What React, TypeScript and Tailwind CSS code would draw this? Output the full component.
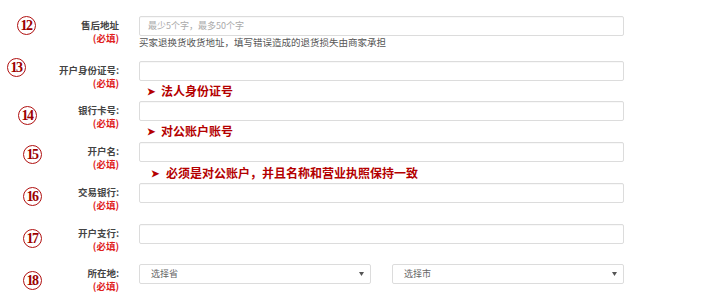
import type { ReactNode } from 'react';

const cjk = { fontFamily: '"Noto Sans CJK SC", "Noto Sans", sans-serif' };

function Circle({ n, className }: { n: string; className: string }) {
  return (
    <div
      className={`w-[19px] h-[19px] shrink-0 rounded-full border border-[#b01010] flex items-center justify-center text-[14px] font-bold leading-none text-[#9c0000] tracking-[-1.5px] ${className}`}
      style={{ fontFamily: '"Liberation Serif", serif' }}
    >
      <span className="-ml-[1px]">{n}</span>
    </div>
  );
}

function Note({ children, className }: { children: ReactNode; className: string }) {
  return (
    <div className={`flex items-center text-[12px] leading-[12px] font-bold text-[#b40000] ${className}`}>
      <span className="text-[10px] w-[14px]">➤</span>
      <span>{children}</span>
    </div>
  );
}

function Row({
  n,
  circle,
  label,
  height,
  children,
}: {
  n: string;
  circle: string;
  label: string;
  height: string;
  children: ReactNode;
}) {
  return (
    <div className={`flex items-start ${height}`}>
      <div className="w-[139px] shrink-0 flex items-start">
        <Circle n={n} className={circle} />
        <div className="ml-auto mr-[20px] mt-[3px] text-right text-[9.5px] leading-[13px]">
          <div className="text-[#444] font-semibold">{label}</div>
          <div className="text-[#e0201c] font-semibold">(必填)</div>
        </div>
      </div>
      <div className="w-[485px]">{children}</div>
    </div>
  );
}

function Input({ placeholder }: { placeholder?: string }) {
  return (
    <div className="h-[20px] border border-[#dcdcdc] rounded-[2px] bg-white flex items-center px-[8px] text-[9px] text-[#aaa] shadow-[inset_0_1px_1px_rgba(0,0,0,0.03)]">
      {placeholder}
    </div>
  );
}

function Select({ text }: { text: string }) {
  return (
    <div className="w-[232px] h-[20px] border border-[#dcdcdc] rounded-[2px] bg-white flex items-center justify-between pl-[11px] pr-[6px] text-[9px] text-[#666]">
      <span>{text}</span>
      <svg width="5" height="4" viewBox="0 0 5 4">
        <path d="M0 0h5L2.5 4z" fill="#555" />
      </svg>
    </div>
  );
}

export default function App() {
  return (
    <div className="w-[710px] h-[298px] bg-white pt-[16px] overflow-hidden" style={cjk}>
      <Row n="12" circle="ml-[17px] mt-0" label="售后地址" height="h-[45px]">
        <Input placeholder="最少5个字，最多50个字" />
        <div className="text-[9.5px] leading-[12px] text-[#555]">
          买家退换货收货地址，填写错误造成的退货损失由商家承担
        </div>
      </Row>
      <Row n="13" circle="ml-[7px] -mt-[3px]" label="开户身份证号:" height="h-[40px]">
        <Input />
        <Note className="mt-[4px] ml-[8px]">法人身份证号</Note>
      </Row>
      <Row n="14" circle="ml-[18px] mt-[5px]" label="银行卡号:" height="h-[41px]">
        <Input />
        <Note className="mt-[4px] ml-[8px]">对公账户账号</Note>
      </Row>
      <Row n="15" circle="ml-[23px] mt-[3px]" label="开户名:" height="h-[41px]">
        <Input />
        <Note className="mt-[5px] ml-[12px]">
          <span className="ml-[1px]">必须是对公账户，并且名称和营业执照保持一致</span>
        </Note>
      </Row>
      <Row n="16" circle="ml-[23px] mt-[4px]" label="交易银行:" height="h-[41px]">
        <Input />
      </Row>
      <Row n="17" circle="ml-[23px] mt-[5px]" label="开户支行:" height="h-[40px]">
        <Input />
      </Row>
      <Row n="18" circle="ml-[23px] mt-[7px]" label="所在地:" height="h-[30px]">
        <div className="flex gap-[21px]">
          <Select text="选择省" />
          <Select text="选择市" />
        </div>
      </Row>
    </div>
  );
}
